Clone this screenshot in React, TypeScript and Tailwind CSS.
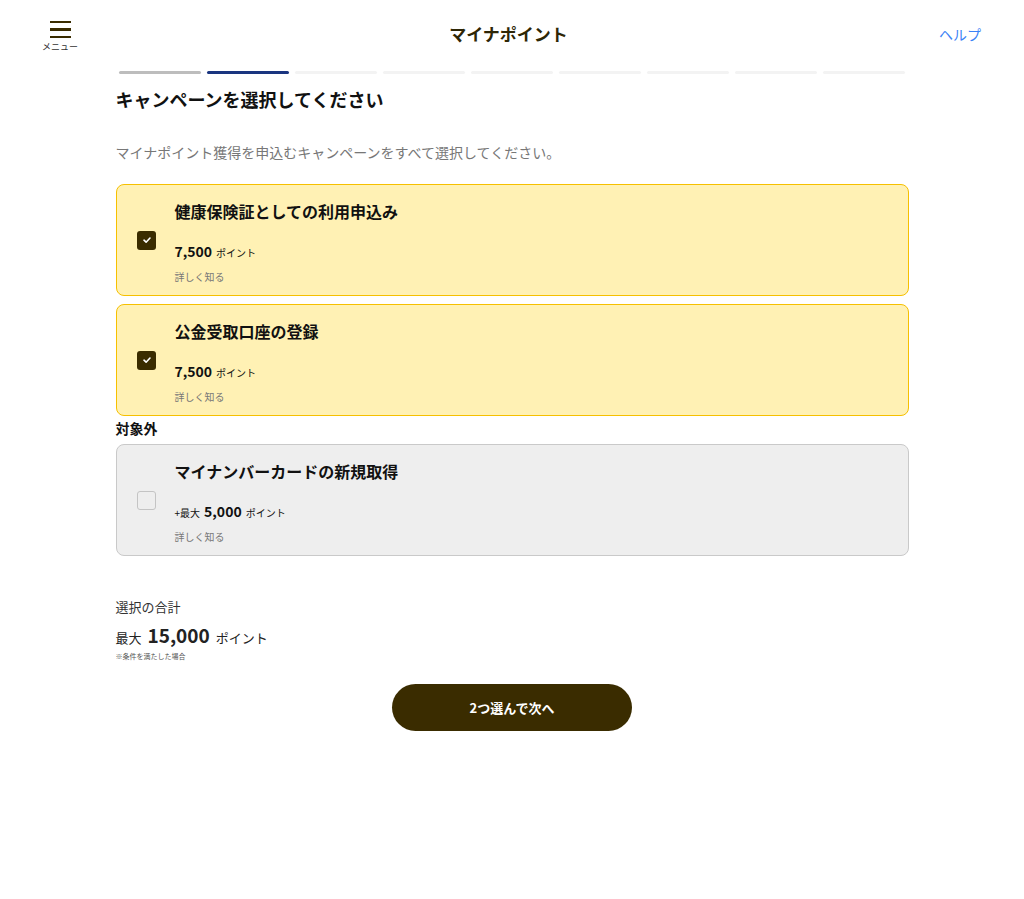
const font = "font-['Noto_Sans_CJK_JP','Noto_Sans',sans-serif]";

type Campaign = {
  title: string;
  points: string;
  prefix?: string;
  checked: boolean;
};

const eligible: Campaign[] = [
  { title: "健康保険証としての利用申込み", points: "7,500", checked: true },
  { title: "公金受取口座の登録", points: "7,500", checked: true },
];

const excluded: Campaign[] = [
  { title: "マイナンバーカードの新規取得", points: "5,000", prefix: "+最大", checked: false },
];

function CheckBox({ checked }: { checked: boolean }) {
  if (checked) {
    return (
      <span className="flex h-[19px] w-[19px] items-center justify-center rounded-[3px] bg-[#3a2c00]">
        <svg width="10" height="10" viewBox="0 0 10 10" fill="none">
          <path d="M2 5.2 L4.1 7.2 L8 3" stroke="white" strokeWidth="1.6" strokeLinecap="round" strokeLinejoin="round" />
        </svg>
      </span>
    );
  }
  return <span className="h-[19px] w-[19px] rounded-[3px] border border-[#c4c4c4] bg-[#eeeeee]" />;
}

function CampaignCard({ c }: { c: Campaign }) {
  const tone = c.checked
    ? "border-[#f6c000] bg-[#fff1b4]"
    : "border-[#c9c9c9] bg-[#eeeeee]";
  return (
    <div className={`flex h-[112px] rounded-lg border ${tone}`}>
      <div className="flex w-[58px] items-center justify-center pl-[2px]">
        <CheckBox checked={c.checked} />
      </div>
      <div className="flex flex-col pt-[14px]">
        <div className="text-[16px] font-bold leading-6 text-[#111]">{c.title}</div>
        <div className="mt-[18px] flex h-5 items-baseline text-[#111]">
          {c.prefix && <span className="mr-[4px] text-[10px]">{c.prefix}</span>}
          <span className="text-[14px] font-bold leading-5">{c.points}</span>
          <span className="ml-[4px] text-[10px]">ポイント</span>
        </div>
        <div className="mt-[9px] text-[10px] leading-[14px] text-[#777]">詳しく知る</div>
      </div>
    </div>
  );
}

export default function App() {
  const steps = ["done", "current", "", "", "", "", "", "", ""];
  return (
    <div className={`min-h-[899px] w-full bg-white ${font}`}>
      {/* Header */}
      <header className="flex h-[68px] items-center justify-between px-[42px]">
        <div className="flex w-[36px] flex-col items-center pt-[4px]">
          <div className="flex flex-col gap-[5px]">
            <span className="h-[2.5px] w-[21px] bg-[#3a2c00]" />
            <span className="h-[2.5px] w-[21px] bg-[#3a2c00]" />
            <span className="h-[2.5px] w-[21px] bg-[#3a2c00]" />
          </div>
          <span className="mt-[4px] whitespace-nowrap text-[9px] leading-none text-[#333]">メニュー</span>
        </div>
        <h1 className="text-[17px] font-bold text-[#2e2606]">マイナポイント</h1>
        <a className="pr-[1px] text-[14px] text-[#3b82f6]">ヘルプ</a>
      </header>

      <main className="mx-auto w-[793px]">
        {/* Progress */}
        <div className="flex gap-[6px] px-[3px] pt-[3px]">
          {steps.map((s, i) => (
            <span
              key={i}
              className={`h-[3px] flex-1 rounded-full ${
                s === "done" ? "bg-[#bdbdbd]" : s === "current" ? "bg-[#1a3580]" : "bg-[#f3f3f3]"
              }`}
            />
          ))}
        </div>

        <h2 className="mt-[13px] text-[18px] font-bold leading-6 text-[#111]">キャンペーンを選択してください</h2>
        <p className="mt-[31px] text-[14px] text-[#777]">マイナポイント獲得を申込むキャンペーンをすべて選択してください。</p>

        <div className="mt-[21px] flex flex-col gap-[8px]">
          {eligible.map((c) => (
            <CampaignCard key={c.title} c={c} />
          ))}
        </div>

        <div className="mt-[2px] text-[14px] font-bold leading-5 text-[#111]">対象外</div>
        <div className="mt-[6px] flex flex-col gap-[8px]">
          {excluded.map((c) => (
            <CampaignCard key={c.title} c={c} />
          ))}
        </div>

        {/* Total */}
        <div className="mt-[41px] text-[13px] text-[#333]">選択の合計</div>
        <div className="mt-[4px] flex items-baseline text-[#222]">
          <span className="text-[13px]">最大</span>
          <span className="ml-[6px] text-[19px] font-bold">15,000</span>
          <span className="ml-[6px] text-[13px]">ポイント</span>
        </div>
        <div className="mt-[4px] text-[7px] leading-none text-[#555]">※条件を満たした場合</div>

        <div className="mt-[24px] flex justify-center">
          <button className="h-[47px] w-[240px] rounded-full bg-[#3a2c00] text-[13px] font-bold text-white">
            2つ選んで次へ
          </button>
        </div>
      </main>
    </div>
  );
}
